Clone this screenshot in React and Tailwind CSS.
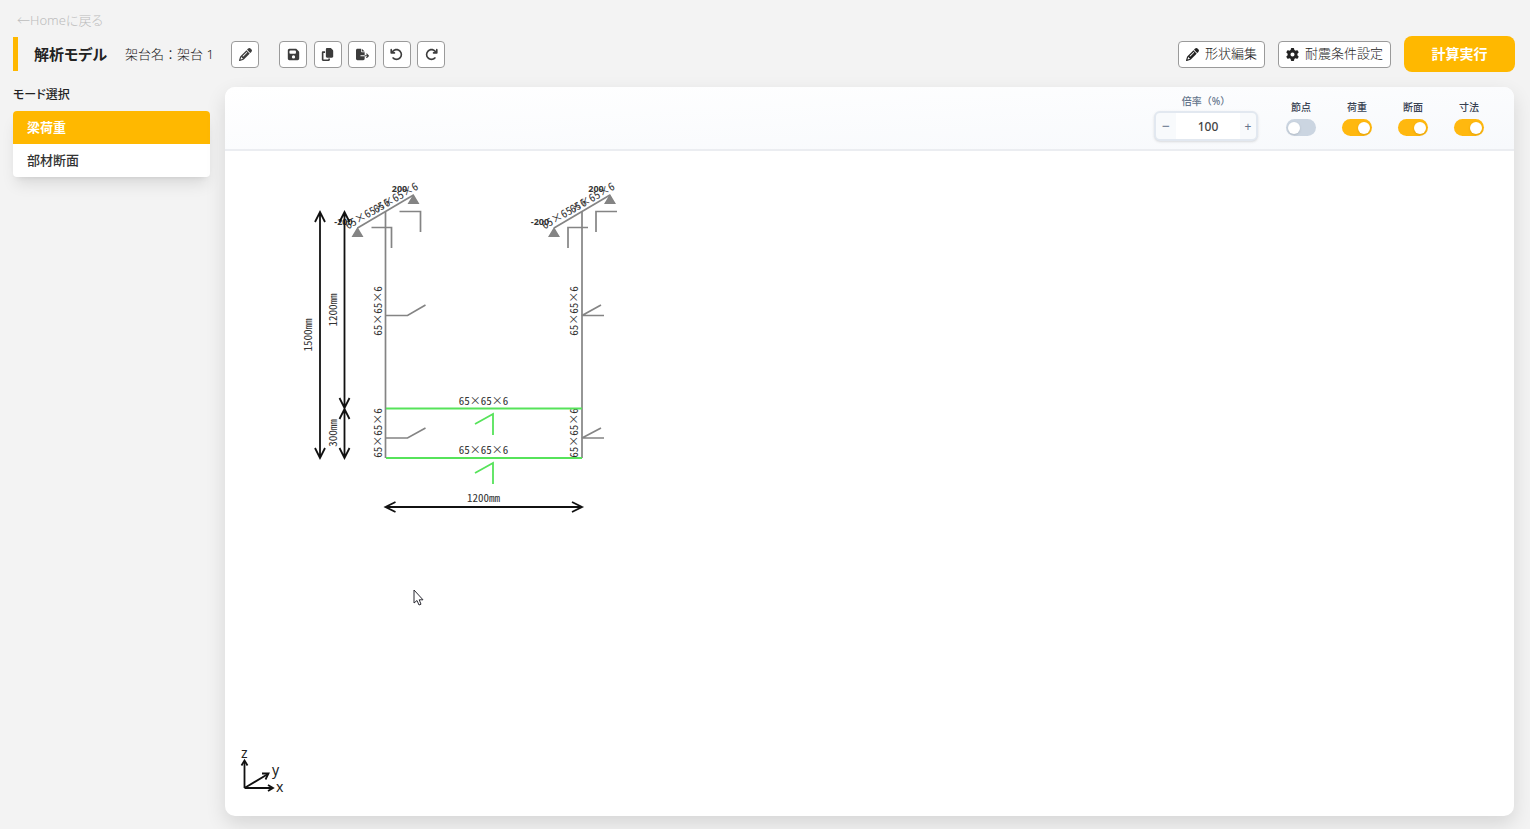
import React, { useState } from 'react'
import {
  FaPencil,
  FaFloppyDisk,
  FaCopy,
  FaFileExport,
  FaArrowRotateLeft,
  FaArrowRotateRight,
  FaGear,
} from 'react-icons/fa6'

const TOOLS = [
  { label: '保存', icon: FaFloppyDisk },
  { label: 'コピー', icon: FaCopy },
  { label: 'エクスポート', icon: FaFileExport },
  { label: '元に戻す', icon: FaArrowRotateLeft },
  { label: 'やり直し', icon: FaArrowRotateRight },
]

const TOGGLES = [
  { id: 'node', label: '節点', on: false },
  { id: 'load', label: '荷重', on: true },
  { id: 'section', label: '断面', on: true },
  { id: 'size', label: '寸法', on: true },
]

const MODES = ['梁荷重', '部材断面']

const SECTION = '65×65×6'

function IconButton({ label, icon: Icon }) {
  return (
    <button
      type="button"
      aria-label={label}
      className="flex h-[27px] w-7 items-center justify-center rounded border border-[#9a9a9a] bg-white text-[#3c3c3c]"
    >
      <Icon size={13} />
    </button>
  )
}

function TextButton({ label, icon: Icon }) {
  return (
    <button
      type="button"
      className="flex h-[27px] items-center gap-1.5 rounded border border-[#9a9a9a] bg-white px-[7px] text-[13px] font-light text-[#222]"
    >
      <Icon size={13} />
      {label}
    </button>
  )
}

function Header() {
  return (
    <header className="pt-2 pl-[13px] pr-[15px]">
      <a href="#home" className="ml-1 block h-6 text-[13px] leading-6 font-light text-[#bdbdbd]">
        ←Homeに戻る
      </a>
      <div className="mt-1 flex h-[36px] items-center">
        <h1 className="flex h-[34px] items-center border-l-5 border-[#ffb800] pl-4 text-[15px] font-bold text-[#222]">
          解析モデル
        </h1>
        <p className="mt-0.5 ml-[18px] w-[90px] text-[13px] font-light whitespace-nowrap text-[#222] [font-feature-settings:normal]">
          架台名：架台 1
        </p>
        <div className="ml-4">
          <IconButton label="名前を編集" icon={FaPencil} />
        </div>
        <div className="ml-5 flex w-[166px] justify-between">
          {TOOLS.map((tool) => (
            <IconButton key={tool.label} {...tool} />
          ))}
        </div>
        <div className="ml-auto flex items-center gap-[13px]">
          <TextButton label="形状編集" icon={FaPencil} />
          <TextButton label="耐震条件設定" icon={FaGear} />
          <button
            type="button"
            className="h-9 w-[111px] rounded-lg bg-[#ffb800] text-sm font-bold text-white"
          >
            計算実行
          </button>
        </div>
      </div>
    </header>
  )
}

function ModeList() {
  const [mode, setMode] = useState(MODES[0])
  return (
    <aside className="w-[197px] shrink-0">
      <h2 className="h-6 text-xs leading-4 font-medium text-[#222]">モード選択</h2>
      <div className="overflow-hidden rounded bg-white shadow-lg">
        {MODES.map((name) => (
          <button
            key={name}
            type="button"
            onClick={() => setMode(name)}
            className={
              name === mode
                ? 'block h-[33px] w-full bg-[#ffb800] px-3.5 text-left text-[13px] font-bold text-white'
                : 'block h-[33px] w-full px-3.5 text-left text-[13px] font-medium text-[#333]'
            }
          >
            {name}
          </button>
        ))}
      </div>
    </aside>
  )
}

function ZoomField() {
  const [zoom, setZoom] = useState(100)
  return (
    <div className="flex flex-col items-center">
      <label
        htmlFor="zoom"
        className="h-4 text-[10px] leading-4 font-medium text-[#64748b] [font-feature-settings:normal]"
      >
        倍率（%）
      </label>
      <div className="mt-0.5 flex h-[30px] w-[104px] overflow-hidden rounded-md border-2 border-[#e2e8f0] bg-[#f8fafc] shadow-sm">
        <button type="button" aria-label="縮小" onClick={() => setZoom(zoom - 10)} className="w-5 text-sm leading-none text-[#64748b]">
          −
        </button>
        <input
          id="zoom"
          value={zoom}
          onChange={(e) => setZoom(Number(e.target.value) || 0)}
          className="min-w-0 flex-1 bg-white pt-px text-center text-xs font-medium text-[#444]"
        />
        <button type="button" aria-label="拡大" onClick={() => setZoom(zoom + 10)} className="w-4 pt-px text-xs text-[#64748b]">
          +
        </button>
      </div>
    </div>
  )
}

function Toggle({ id, label, on }) {
  return (
    <div className="flex flex-col items-center">
      <label htmlFor={id} className="h-4 text-[10px] leading-4 font-medium whitespace-nowrap text-[#374151]">
        {label}
      </label>
      <input
        id={id}
        type="checkbox"
        role="switch"
        defaultChecked={on}
        className="mt-1 flex h-[17px] w-[30px] appearance-none items-center rounded-full bg-[#cbd5e1] px-0.5 before:size-3 before:rounded-full before:bg-white before:shadow-sm checked:justify-end checked:bg-[#ffb80f]"
      />
    </div>
  )
}

// Line with an open arrow head at both ends
function Dimension({ x1, y1, x2, y2 }) {
  const heads =
    x1 === x2
      ? `M${x1 - 5} ${y1 + 10}L${x1} ${y1}L${x1 + 5} ${y1 + 10}M${x1 - 5} ${y2 - 10}L${x1} ${y2}L${x1 + 5} ${y2 - 10}`
      : `M${x1 + 10} ${y1 - 5}L${x1} ${y1}L${x1 + 10} ${y1 + 5}M${x2 - 10} ${y1 - 5}L${x2} ${y1}L${x2 - 10} ${y1 + 5}`
  return <path d={`M${x1} ${y1}L${x2} ${y2}${heads}`} fill="none" stroke="#111" strokeWidth="1.8" />
}

const MONO_TEXT =
  "text-[11px] font-['Noto_Sans_Mono_CJK_JP','Noto_Sans_CJK_JP',monospace] [font-feature-settings:'hwid']"
const LOAD_TEXT = 'text-[9px] font-bold'

function Label({ x, y, angle = 0, children, className = MONO_TEXT }) {
  return (
    <text
      x={x}
      y={y}
      textAnchor="middle"
      transform={`rotate(${angle} ${x} ${y})`}
      className={className}
      fill="#333"
    >
      {children}
    </text>
  )
}

// Post with the brace, its supports and loads; x is the post centre
function Frame({ x, mirrored }) {
  return (
    <g>
      <g fill="none" stroke="#848484" strokeWidth="1.7">
        <path d={`M${x} 61V307`} />
        <path d={`M${x - 28} 77L${x + 28} 44`} />
        {mirrored ? (
          <>
            <path d={`M${x + 6} 76.5H${x - 14}V97M${x + 35} 60.5H${x + 14}V81`} />
            <path d={`M${x + 22} 164.5H${x}L${x + 19} 154M${x + 22} 287H${x}L${x + 19} 277`} />
          </>
        ) : (
          <>
            <path d={`M${x - 14} 76.5H${x + 6}V97M${x + 14} 60.5H${x + 35}V81`} />
            <path d={`M${x} 164.5H${x + 22}L${x + 40} 154M${x} 287H${x + 22}L${x + 40} 277`} />
          </>
        )}
      </g>
      <path d={`M${x - 28} 76L${x - 34} 86H${x - 22}ZM${x + 28} 43L${x + 22} 53H${x + 34}Z`} fill="#848484" />
      <Label x={x - 4} y={160} angle={-90}>{SECTION}</Label>
      <Label x={x - 4} y={282} angle={-90}>{SECTION}</Label>
      <Label x={x - 16} y={66} angle={-30}>{SECTION}</Label>
      <Label x={x + 12} y={50} angle={-30}>{SECTION}</Label>
      <Label x={x + 14} y={41} className={LOAD_TEXT}>200</Label>
      <Label x={x - 42} y={74} className={LOAD_TEXT}>-200</Label>
    </g>
  )
}

function Drawing() {
  return (
    <svg className="h-[420px] w-full" role="img" aria-label="架台 1 の解析モデル">
      <Frame x={160.5} />
      <Frame x={357} mirrored />

      {/* Beams */}
      <g fill="none" stroke="#56e35a" strokeWidth="1.8">
        <path d="M161 257.5H357M161 307H357" />
        <path d="M250 273L268 263V284M250 322L268 312V333" />
      </g>
      <Label x={258.5} y={254}>{SECTION}</Label>
      <Label x={258.5} y={303}>{SECTION}</Label>

      {/* Dimensions */}
      <Dimension x1={95} y1={61} x2={95} y2={307} />
      <Dimension x1={119.5} y1={61} x2={119.5} y2={257} />
      <Dimension x1={119.5} y1={258} x2={119.5} y2={307} />
      <Dimension x1={160.5} y1={356} x2={357} y2={356} />
      <Label x={87} y={184} angle={-90}>1500mm</Label>
      <Label x={112} y={159} angle={-90}>1200mm</Label>
      <Label x={112} y={282} angle={-90}>300mm</Label>
      <Label x={258.5} y={351}>1200mm</Label>
    </svg>
  )
}

function Axes() {
  return (
    <svg width="60" height="64" className="absolute bottom-4 left-3" role="img" aria-label="座標軸">
      <g fill="none" stroke="#111" strokeWidth="1.8">
        <path d="M7.5 52V25M7.5 52H35M7.5 52L31 38" />
        <path d="M4.5 29.5L7.5 24.5L10.5 29.5M31 49L36 52L31 55M25 37.5L31.5 37.5L28.5 43.5" />
      </g>
      <g className="text-sm" fill="#222">
        <text x="4" y="22">z</text>
        <text x="35" y="39">y</text>
        <text x="39" y="56">x</text>
      </g>
    </svg>
  )
}

function Cursor() {
  return (
    <svg width="12" height="18" viewBox="0 0 12 18" className="absolute top-[438px] left-[188px]" aria-hidden="true">
      <path d="M1 1V14L4 11.500L6 16L8 15.200L6.200 10.800H10Z" fill="#fff" stroke="#2b2b33" strokeWidth="1" />
    </svg>
  )
}

export default function App() {
  return (
    <div className="flex min-h-screen flex-col bg-[#f3f3f3] font-['Noto_Sans','Noto_Sans_CJK_JP',sans-serif] [font-feature-settings:'palt']">
      <Header />
      <div className="flex flex-1 gap-[15px] pt-[15px] pr-4 pb-[13px] pl-[13px]">
        <ModeList />
        <main className="flex flex-1 flex-col overflow-hidden rounded-[10px] bg-white shadow-[0_8px_20px_rgba(0,0,0,0.12)]">
          <div className="flex h-16 shrink-0 justify-end border-b-2 border-[#ebedf1] bg-linear-to-br from-white to-[#f7f9fc] pr-[30px]">
            <div className="mt-1.5 mr-7">
              <ZoomField />
            </div>
            <div className="mt-3 flex gap-[26px]">
              {TOGGLES.map((t) => (
                <Toggle key={t.id} {...t} />
              ))}
            </div>
          </div>
          <div className="relative flex-1">
            <Drawing />
            <Axes />
            <Cursor />
          </div>
        </main>
      </div>
    </div>
  )
}
